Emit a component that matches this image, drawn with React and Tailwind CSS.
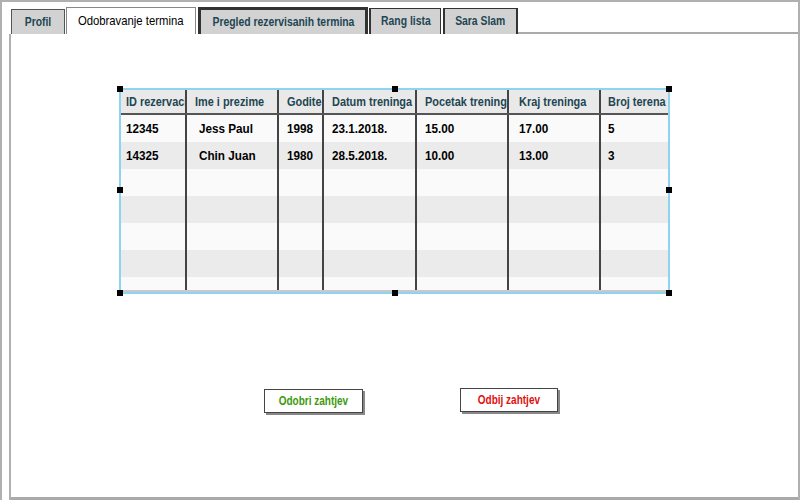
import React from "react";

const font = { fontFamily: '"Liberation Sans", Arial, sans-serif' };

const cols = [
  { w: 66, h: "ID rezervacija", pl: "pl-[5px]", dpl: "pl-[5px]" },
  { w: 92, h: "Ime i prezime", pl: "pl-[8px]", dpl: "pl-[12px]" },
  { w: 45, h: "Godite", pl: "pl-[8px]", dpl: "pl-[8px]" },
  { w: 93, h: "Datum treninga", pl: "pl-[8px]", dpl: "pl-[8px]" },
  { w: 92, h: "Pocetak treninga", pl: "pl-[8px]", dpl: "pl-[8px]" },
  { w: 92, h: "Kraj treninga", pl: "pl-[10px]", dpl: "pl-[10px]" },
  { w: 67, h: "Broj terena", pl: "pl-[7px]", dpl: "pl-[7px]" },
];

const rows = [
  ["12345", "Jess Paul", "1998", "23.1.2018.", "15.00", "17.00", "5"],
  ["14325", "Chin Juan", "1980", "28.5.2018.", "10.00", "13.00", "3"],
  ["", "", "", "", "", "", ""],
  ["", "", "", "", "", "", ""],
  ["", "", "", "", "", "", ""],
  ["", "", "", "", "", "", ""],
];

function Handle({ className }) {
  return <div className={"absolute w-[6px] h-[6px] bg-black " + className} />;
}

const tabCls =
  "bg-[#d2d2d2] border-b-0 flex items-center justify-center text-[12.5px] font-bold text-[#1e4652] whitespace-nowrap";
const tabText = "inline-block scale-x-[0.83] origin-center";

export default function App() {
  return (
    <div className="w-[800px] h-[500px] bg-white relative overflow-hidden" style={font}>
      <div className="absolute inset-0 border-t-2 border-l-2 border-r-2 border-[#b0b0b0] pointer-events-none" />
      {/* tabs */}
      <div className="flex items-end h-[34px] pl-[11px]">
        <div className={"h-[25px] w-[54px] border border-[#555] " + tabCls}>
          <span className={tabText}>Profil</span>
        </div>
        <div className="ml-[1px] h-[27px] w-[130px] bg-white border border-[#888] border-b-0 flex items-center justify-center text-[13px] text-black whitespace-nowrap">
          <span className="inline-block scale-x-[0.87] origin-center">Odobravanje termina</span>
        </div>
        <div className={"ml-[2px] h-[27px] w-[170px] border-[3px] border-[#333] " + tabCls}>
          <span className={tabText}>Pregled rezervisanih termina</span>
        </div>
        <div className={"ml-[1px] h-[26px] w-[72px] border border-[#333] border-l-[2px] " + tabCls}>
          <span className={tabText}>Rang lista</span>
        </div>
        <div className={"ml-[2px] h-[26px] w-[75px] border border-[#333] border-l-[2px] border-r-[2px] " + tabCls}>
          <span className={tabText}>Sara Slam</span>
        </div>
        <div className="flex-1 border-b-2 border-[#aaa]" />
      </div>
      {/* body */}
      <div className="flex h-[466px]">
        <div className="w-[11px] border-r-2 border-[#b0b0b0]" />
        <div className="flex-1 border-b-[3px] border-[#aaa] flex flex-col">
          <div className="pl-[108px] pt-[54px]">
            <div className="relative w-[551px] border-2 border-[#8fd3f2] bg-white">
              <div className="flex h-[25px] bg-[#e9e9e9] border-b-2 border-[#555]">
                {cols.map((c, i) => (
                  <div
                    key={i}
                    className={
                      "shrink-0 overflow-hidden whitespace-nowrap flex items-center text-[13px] font-bold text-[#1e4652] " +
                      c.pl +
                      (i < cols.length - 1 ? " border-r-2 border-[#444]" : "")
                    }
                    style={{ width: c.w }}
                  >
                    <span className="inline-block scale-x-[0.84] origin-left">{c.h}</span>
                  </div>
                ))}
              </div>
              {rows.map((r, ri) => (
                <div key={ri} className={"flex h-[27px] " + (ri % 2 === 0 ? "bg-[#fafafa]" : "bg-[#ebebeb]")}>
                  {r.map((v, i) => (
                    <div
                      key={i}
                      className={
                        "shrink-0 overflow-hidden whitespace-nowrap flex items-center text-[13px] font-bold text-black " +
                        cols[i].dpl +
                        (i < cols.length - 1 ? " border-r-2 border-[#444]" : "")
                      }
                      style={{ width: cols[i].w }}
                    >
                      <span className="inline-block scale-x-[0.9] origin-left">{v}</span>
                    </div>
                  ))}
                </div>
              ))}
              <div className="flex h-[15px] bg-[#fafafa] border-b-2 border-[#c8c8c8]">
                {cols.map((c, i) => (
                  <div
                    key={i}
                    className={"shrink-0" + (i < cols.length - 1 ? " border-r-2 border-[#444]" : "")}
                    style={{ width: c.w }}
                  />
                ))}
              </div>
              <Handle className="-left-[4px] -top-[4px]" />
              <Handle className="left-[271px] -top-[4px]" />
              <Handle className="-right-[4px] -top-[4px]" />
              <Handle className="-left-[4px] top-[97px]" />
              <Handle className="-right-[4px] top-[97px]" />
              <Handle className="-left-[4px] -bottom-[4px]" />
              <Handle className="left-[271px] -bottom-[4px]" />
              <Handle className="-right-[4px] -bottom-[4px]" />
            </div>
          </div>
          <div className="flex pt-[94px] pl-[253px]">
            <div className="mt-[1px] w-[99px] h-[24px] bg-white border border-[#444] shadow-[2px_2px_0_#888] flex items-center justify-center text-[12.5px] font-bold text-[#3c9a0c] whitespace-nowrap">
              <span className="inline-block scale-x-[0.8] origin-center">Odobri zahtjev</span>
            </div>
            <div className="ml-[97px] w-[98px] h-[24px] bg-white border border-[#444] shadow-[2px_2px_0_#888] flex items-center justify-center text-[12.5px] font-bold text-[#e01010] whitespace-nowrap">
              <span className="inline-block scale-x-[0.8] origin-center">Odbij zahtjev</span>
            </div>
          </div>
        </div>
      </div>
    </div>
  );
}
